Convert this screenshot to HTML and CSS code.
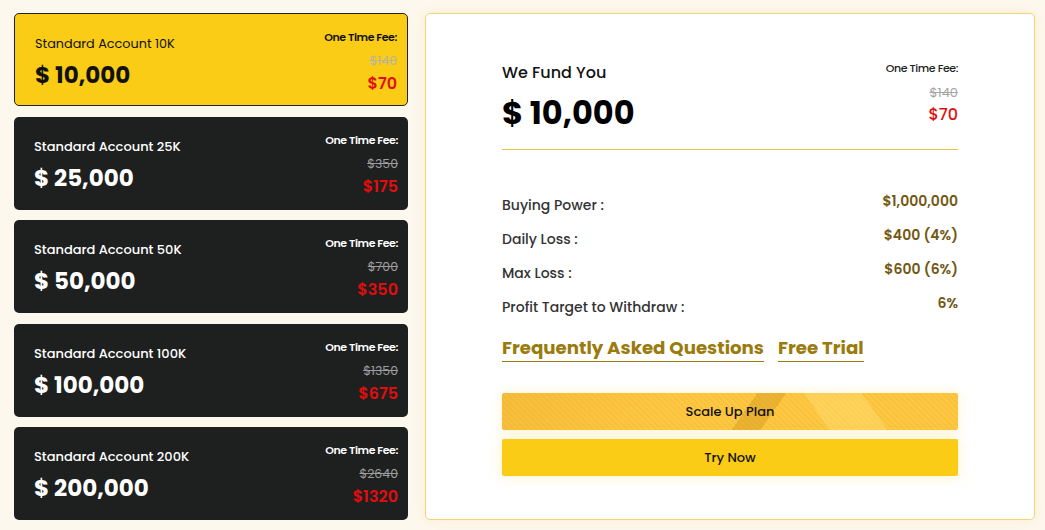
FILE: index.html
```html
<!DOCTYPE html>
<html lang="en">
<head>
    <meta charset="UTF-8">
    <meta name="viewport" content="width=device-width, initial-scale=1.0">
    <title>Funded Accounts</title>
    <link rel="stylesheet" href="styles.css">
</head>
<body>

<div class="wrap">
    <div class="plans">
        <div class="plan active">
            <div class="plan-info">
                <div class="plan-name">Standard Account 10K</div>
                <div class="plan-amount">$ 10,000</div>
            </div>
            <div class="plan-fee">
                <div class="fee-label">One Time Fee:</div>
                <div class="fee-old">$140</div>
                <div class="fee-new">$70</div>
            </div>
        </div>
        <div class="plan">
            <div class="plan-info">
                <div class="plan-name">Standard Account 25K</div>
                <div class="plan-amount">$ 25,000</div>
            </div>
            <div class="plan-fee">
                <div class="fee-label">One Time Fee:</div>
                <div class="fee-old">$350</div>
                <div class="fee-new">$175</div>
            </div>
        </div>
        <div class="plan">
            <div class="plan-info">
                <div class="plan-name">Standard Account 50K</div>
                <div class="plan-amount">$ 50,000</div>
            </div>
            <div class="plan-fee">
                <div class="fee-label">One Time Fee:</div>
                <div class="fee-old">$700</div>
                <div class="fee-new">$350</div>
            </div>
        </div>
        <div class="plan">
            <div class="plan-info">
                <div class="plan-name">Standard Account 100K</div>
                <div class="plan-amount">$ 100,000</div>
            </div>
            <div class="plan-fee">
                <div class="fee-label">One Time Fee:</div>
                <div class="fee-old">$1350</div>
                <div class="fee-new">$675</div>
            </div>
        </div>
        <div class="plan">
            <div class="plan-info">
                <div class="plan-name">Standard Account 200K</div>
                <div class="plan-amount">$ 200,000</div>
            </div>
            <div class="plan-fee">
                <div class="fee-label">One Time Fee:</div>
                <div class="fee-old">$2640</div>
                <div class="fee-new">$1320</div>
            </div>
        </div>
    </div>

    <div class="detail">
        <div class="detail-head">
            <div>
                <div class="detail-title">We Fund You</div>
                <div class="detail-amount">$ 10,000</div>
            </div>
            <div class="detail-fee">
                <div class="fee-label">One Time Fee:</div>
                <div class="fee-old">$140</div>
                <div class="fee-new">$70</div>
            </div>
        </div>

        <div class="rules">
            <div class="rule"><span>Buying Power :</span><b>$1,000,000</b></div>
            <div class="rule"><span>Daily Loss :</span><b>$400 (4%)</b></div>
            <div class="rule"><span>Max Loss :</span><b>$600 (6%)</b></div>
            <div class="rule"><span>Profit Target to Withdraw :</span><b>6%</b></div>
        </div>

        <div class="links">
            <a href="#">Frequently Asked Questions</a>
            <a href="#">Free Trial</a>
        </div>

        <button class="btn btn-scale">Scale Up Plan</button>
        <button class="btn btn-try">Try Now</button>
    </div>
</div>

</body>
</html>
```

FILE: styles.css
```css
body {
    font-family: Poppins, 'Inter', sans-serif;
    background-color: #fdf8ee;
    margin: 0;
    padding: 0;
}

.wrap {
    display: flex;
    gap: 17px;
    padding: 13px 10px 10px 14px;
}

/* left column */
.plans {
    width: 394px;
    display: flex;
    flex-direction: column;
    gap: 10.5px;
}

.plan {
    height: 93px;
    box-sizing: border-box;
    display: flex;
    justify-content: space-between;
    padding: 0 10px 0 20px;
    border-radius: 5px;
    background-color: #1e1f1f;
    color: #fff;
}

.plan.active {
    background-color: #facc15;
    border: 1px solid #222;
    color: #111;
}

.plan-info {
    padding-top: 21px;
}

.plan-name {
    font-size: 13px;
    font-weight: 500;
    line-height: 18px;
}

.plan.active .plan-name {
    font-weight: 400;
    font-size: 12.8px;
}

.plan-amount {
    font-size: 23px;
    font-weight: 700;
    line-height: 26px;
    margin-top: 9px;
}

.plan-fee {
    padding-top: 15px;
    text-align: right;
}

.fee-label {
    font-size: 11px;
    font-weight: 600;
    line-height: 16px;
    letter-spacing: -0.4px;
}

.fee-old {
    font-size: 12.5px;
    line-height: 16px;
    margin-top: 8px;
    color: #9d9d9d;
    text-decoration: line-through;
}

.plan.active .fee-old {
    color: #b9b49a;
}

.fee-new {
    font-size: 16px;
    font-weight: 600;
    line-height: 20px;
    margin-top: 5px;
    color: #e20e0e;
}

/* right panel */
.detail {
    flex: 1;
    height: 507px;
    box-sizing: border-box;
    background-color: #fff;
    border: 1px solid #f1d474;
    border-radius: 5px;
    box-shadow: 0 0 12px rgba(240, 205, 120, 0.25);
    padding: 48px 76px 0 76px;
}

.detail-head {
    display: flex;
    justify-content: space-between;
    align-items: flex-start;
    padding-bottom: 16px;
    border-bottom: 1px solid #e9c54a;
}

.detail-title {
    font-size: 16px;
    font-weight: 500;
    line-height: 22px;
    color: #111;
}

.detail-amount {
    font-size: 32px;
    font-weight: 700;
    line-height: 40px;
    margin-top: 9px;
    color: #000;
}

.detail-fee {
    text-align: right;
}

.detail-fee .fee-label {
    font-size: 11px;
    font-weight: 500;
    line-height: 12px;
    color: #222;
}

.detail-fee .fee-old {
    font-size: 13px;
    margin-top: 11px;
    color: #a5a5a5;
}

.detail-fee .fee-new {
    font-size: 16px;
    font-weight: 500;
    line-height: 22px;
    margin-top: 3px;
}

.rules {
    margin-top: 38px;
}

.rule {
    height: 34px;
    display: flex;
    justify-content: space-between;
    align-items: center;
    font-size: 14px;
}

.rule span {
    font-weight: 500;
    color: #333;
}

.rule b {
    font-weight: 600;
    color: #725812;
    margin-bottom: 8px;
}

.links {
    display: flex;
    gap: 14px;
    margin-top: 12px;
}

.links a {
    font-size: 18.2px;
    font-weight: 700;
    line-height: 24px;
    color: #9a7b0c;
    text-decoration: none;
    padding-bottom: 1px;
    border-bottom: 1px solid #9a7b0c;
}

.btn {
    display: block;
    width: 100%;
    height: 37px;
    border: none;
    border-radius: 2px;
    font-family: inherit;
    font-size: 13px;
    font-weight: 500;
    color: #111;
    cursor: pointer;
}

.btn-scale {
    margin-top: 31px;
    background-color: #fec843;
    background-image:
        linear-gradient(125deg, transparent 53%, rgba(200, 140, 20, 0.35) 53%, rgba(200, 140, 20, 0.35) 59%, transparent 59%),
        linear-gradient(55deg, transparent 68%, rgba(255, 220, 110, 0.5) 68%, rgba(255, 220, 110, 0.5) 80%, transparent 80%),
        linear-gradient(125deg, rgba(230, 170, 40, 0.35) 0%, transparent 35%),
        repeating-linear-gradient(45deg, rgba(210, 150, 30, 0.12) 0 2px, transparent 2px 4px);
    box-shadow: 0 0 12px rgba(250, 215, 110, 0.35);
}

.btn-try {
    margin-top: 9px;
    background-color: #facc15;
    box-shadow: 0 0 14px rgba(250, 210, 80, 0.35);
}
```
